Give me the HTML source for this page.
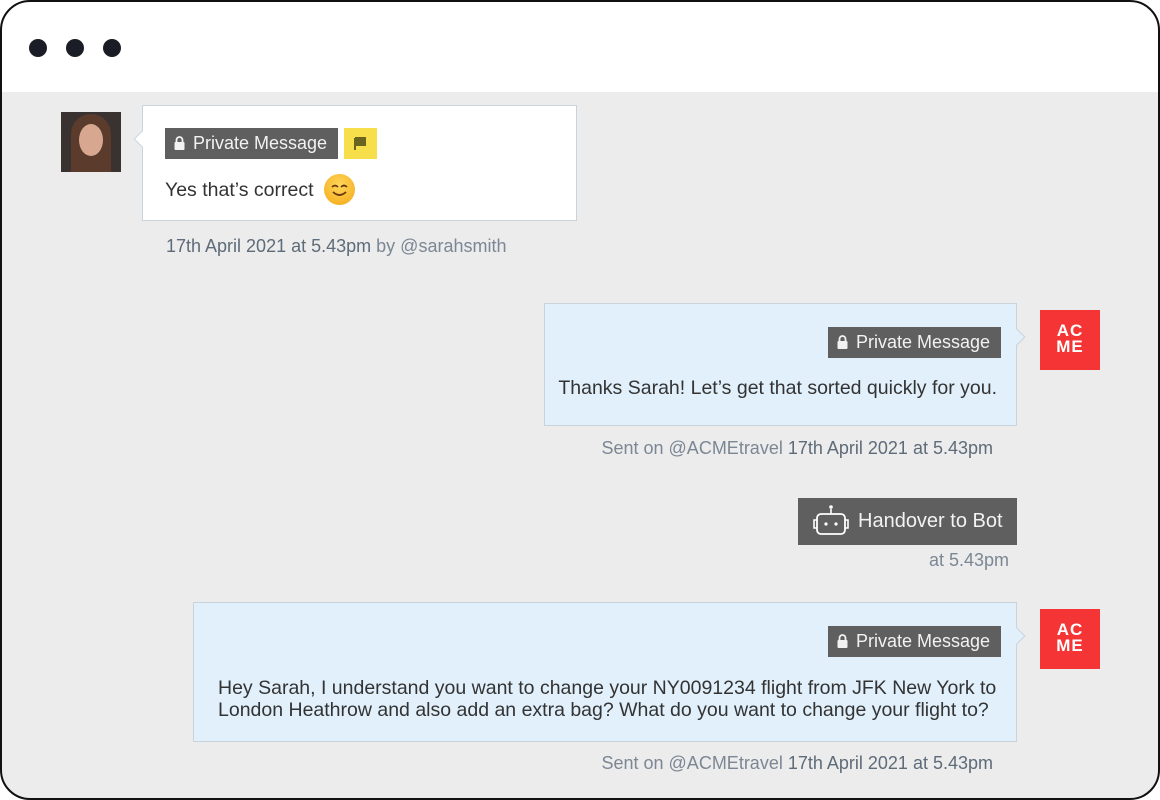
<!DOCTYPE html>
<html><head><style>
*{box-sizing:border-box;margin:0;padding:0}
body{width:1160px;height:800px;background:#fff;font-family:"Liberation Sans",sans-serif;position:relative;overflow:hidden}
.frame{position:absolute;left:0;top:0;width:1160px;height:800px;border-radius:30px;overflow:hidden;background:#ececec}
.border{position:absolute;left:0;top:0;width:1160px;height:800px;border:2px solid #111;border-radius:30px;z-index:5}
.head{position:absolute;left:0;top:0;right:0;height:92px;background:#fff}
.dot{position:absolute;top:39px;width:18px;height:18px;border-radius:50%;background:#1a1d26}
.abs{position:absolute}
.bub{position:absolute;border:1px solid #c9d3dc}
.badge{position:absolute;background:#5f5f5f;color:#f2f2f2;font-size:18px;height:31px;line-height:31px;padding-left:28px;white-space:nowrap}
.badge svg{position:absolute;left:9px;top:8px}
.txt{position:absolute;font-size:19.5px;color:#333;white-space:nowrap}
.meta{position:absolute;font-size:18px;color:#7b8794;white-space:nowrap}
.meta b{font-weight:normal;color:#5e6b78}
.acme{position:absolute;width:60px;height:60px;background:#f53535;color:#fff;font-weight:bold;font-size:17px;line-height:16px;text-align:center;padding-top:13px;letter-spacing:1px}
.tri{position:absolute;width:12px;height:12px;transform:rotate(45deg)}
</style></head><body>
<div class="frame">
<div class="head"></div>
<div class="dot" style="left:29px"></div><div class="dot" style="left:66px"></div><div class="dot" style="left:103px"></div>

<div class="abs" style="left:61px;top:112px;width:60px;height:60px;background:#3a3230;overflow:hidden">
<div class="abs" style="left:10px;top:2px;width:40px;height:60px;border-radius:20px 20px 0 0;background:#5a3b2c"></div>
<div class="abs" style="left:18px;top:12px;width:24px;height:32px;border-radius:50%;background:#d7a88f"></div>
</div>
<div class="bub" style="left:142px;top:105px;width:435px;height:116px;background:#fff"></div>
<div class="tri" style="left:136px;top:133px;background:#fff;border-left:1px solid #c9d3dc;border-bottom:1px solid #c9d3dc"></div>
<div class="badge" style="left:165px;top:128px;width:173px"><svg width="11" height="14" viewBox="0 0 11 14"><path d="M2.5 6V4a3 3 0 0 1 6 0v2" stroke="#f2f2f2" stroke-width="1.8" fill="none"/><rect x="0.5" y="6" width="10" height="8" rx="1" fill="#f2f2f2"/></svg>Private Message</div>
<div class="abs" style="left:344px;top:128px;width:33px;height:31px;background:#f7df4b"><svg width="33" height="31"><path d="M11 10v12M11 10h10v7H11" stroke="#6b6320" stroke-width="2" fill="#6b6320"/></svg></div>
<div class="txt" style="left:165px;top:179px">Yes that’s correct</div>
<div class="abs" style="left:324px;top:174px;width:31px;height:31px;border-radius:50%;background:radial-gradient(circle at 50% 35%,#ffd65a,#f3a817)"><svg width="31" height="31"><path d="M8 13q3-3 6 0M17 13q3-3 6 0" stroke="#6a3a10" stroke-width="1.8" fill="none"/><path d="M9 18q6.5 6 13 0" stroke="#6a3a10" stroke-width="1.8" fill="none"/></svg></div>
<div class="meta" style="left:166px;top:236px"><b>17th April 2021 at 5.43pm</b> by @sarahsmith</div>

<div class="bub" style="left:544px;top:303px;width:473px;height:123px;background:#e1f0fb"></div>
<div class="tri" style="left:1011px;top:331px;background:#e1f0fb;border-right:1px solid #c9d3dc;border-top:1px solid #c9d3dc"></div>
<div class="badge" style="left:828px;top:327px;width:173px"><svg width="11" height="14" viewBox="0 0 11 14"><path d="M2.5 6V4a3 3 0 0 1 6 0v2" stroke="#f2f2f2" stroke-width="1.8" fill="none"/><rect x="0.5" y="6" width="10" height="8" rx="1" fill="#f2f2f2"/></svg>Private Message</div>
<div class="txt" style="right:163px;top:377px">Thanks Sarah! Let’s get that sorted quickly for you.</div>
<div class="acme" style="left:1040px;top:310px">AC<br>ME</div>
<div class="meta" style="right:167px;top:438px">Sent on @ACMEtravel <b>17th April 2021 at 5.43pm</b></div>

<div class="abs" style="left:798px;top:498px;width:219px;height:47px;background:#5f5f5f;color:#f2f2f2;font-size:20px;line-height:47px;padding-left:60px;white-space:nowrap">Handover to Bot</div>
<svg class="abs" style="left:812px;top:503px" width="40" height="36" viewBox="0 0 40 36"><circle cx="19" cy="4" r="1.8" fill="#fff"/><path d="M19 6v5" stroke="#fff" stroke-width="1.6"/><rect x="5" y="11" width="28" height="20" rx="4" stroke="#fff" stroke-width="1.8" fill="none"/><path d="M5 17H2v8h3M33 17h3v8h-3" stroke="#fff" stroke-width="1.6" fill="none"/><circle cx="14" cy="21" r="1.6" fill="#fff"/><circle cx="24" cy="21" r="1.6" fill="#fff"/></svg>
<div class="meta" style="right:151px;top:550px">at 5.43pm</div>

<div class="bub" style="left:193px;top:602px;width:824px;height:140px;background:#e1f0fb"></div>
<div class="tri" style="left:1011px;top:630px;background:#e1f0fb;border-right:1px solid #c9d3dc;border-top:1px solid #c9d3dc"></div>
<div class="badge" style="left:828px;top:626px;width:173px"><svg width="11" height="14" viewBox="0 0 11 14"><path d="M2.5 6V4a3 3 0 0 1 6 0v2" stroke="#f2f2f2" stroke-width="1.8" fill="none"/><rect x="0.5" y="6" width="10" height="8" rx="1" fill="#f2f2f2"/></svg>Private Message</div>
<div class="txt" style="left:218px;top:677px;line-height:22px">Hey Sarah, I understand you want to change your NY0091234 flight from JFK New York to<br>London Heathrow and also add an extra bag? What do you want to change your flight to?</div>
<div class="acme" style="left:1040px;top:609px">AC<br>ME</div>
<div class="meta" style="right:167px;top:753px">Sent on @ACMEtravel <b>17th April 2021 at 5.43pm</b></div>
</div>
<div class="border"></div>
</body></html>
